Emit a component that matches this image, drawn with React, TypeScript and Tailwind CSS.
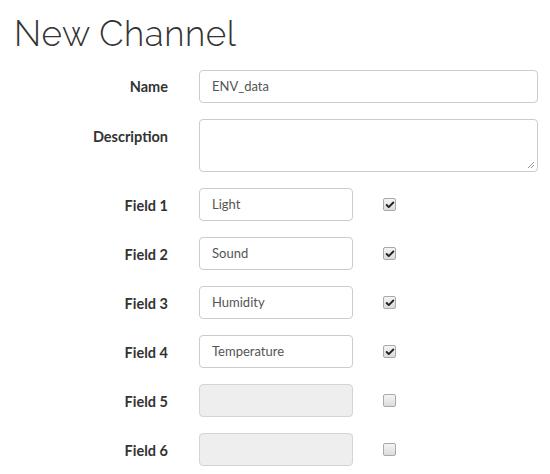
import { Check } from "lucide-react"

type Field = {
  label: string
  value: string
  enabled: boolean
}

const fields: Field[] = [
  { label: "Field 1", value: "Light", enabled: true },
  { label: "Field 2", value: "Sound", enabled: true },
  { label: "Field 3", value: "Humidity", enabled: true },
  { label: "Field 4", value: "Temperature", enabled: true },
  { label: "Field 5", value: "", enabled: false },
  { label: "Field 6", value: "", enabled: false },
]

function Checkbox({ checked }: { checked: boolean }) {
  return (
    <span className="flex h-[13px] w-[13px] items-center justify-center rounded-[2px] border border-[#a9a9a9] bg-gradient-to-b from-[#f4f4f4] to-[#dcdcdc]">
      {checked && <Check className="h-[10px] w-[10px] text-[#222]" strokeWidth={4.5} />}
    </span>
  )
}

export default function App() {
  return (
    <div className="min-h-[474px] bg-white font-['Lato',sans-serif]">
      {/* Page title */}
      <h1 className="pl-[14px] pt-[12px] font-['Raleway','Lato',sans-serif] text-[35px] font-light leading-[44px] tracking-[0.6px] text-[#333]">
        New Channel
      </h1>

      <div className="mt-[14px] flex flex-col gap-4">
        {/* Name */}
        <div className="flex items-center">
          <label className="w-[168px] text-right text-[14.5px] font-bold text-[#333]">Name</label>
          <div className="ml-[31px] flex h-[33px] w-[339px] items-center rounded border border-[#ccc] px-3 text-[13px] text-[#555]">
            ENV_data
          </div>
        </div>

        {/* Description */}
        <div className="flex items-start">
          <label className="w-[168px] pt-[7px] text-right text-[14.5px] font-bold text-[#333]">Description</label>
          <div className="relative ml-[31px] h-[53px] w-[339px] rounded border border-[#ccc]">
            <svg className="absolute bottom-[2px] right-[2px]" width="8" height="8" viewBox="0 0 8 8">
              <path d="M7 1 L1 7 M7 4 L4 7" stroke="#999" strokeWidth="1" />
            </svg>
          </div>
        </div>

        {fields.map(({ label, value, enabled }) => (
          <div key={label} className="flex items-center">
            <label className="w-[168px] pt-[2px] text-right text-[14.5px] font-bold text-[#333]">{label}</label>
            <div
              className={`ml-[31px] flex h-[33px] w-[154px] items-center rounded border px-3 text-[13px] text-[#555] ${
                enabled ? "border-[#ccc] bg-white" : "border-[#d4d4d4] bg-[#eee]"
              }`}
            >
              {value}
            </div>
            <div className="ml-[30px]">
              <Checkbox checked={enabled} />
            </div>
          </div>
        ))}
      </div>
    </div>
  )
}
